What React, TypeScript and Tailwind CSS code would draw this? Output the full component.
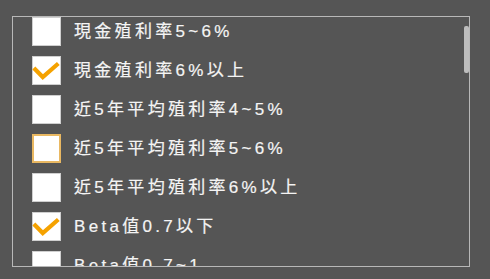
import type { ReactNode } from "react";

type Item = {
  label: string;
  checked?: boolean;
  focused?: boolean;
};

const items: Item[] = [
  { label: "現金殖利率5~6%" },
  { label: "現金殖利率6%以上", checked: true },
  { label: "近5年平均殖利率4~5%" },
  { label: "近5年平均殖利率5~6%", focused: true },
  { label: "近5年平均殖利率6%以上" },
  { label: "Beta值0.7以下", checked: true },
  { label: "Beta值0.7~1" },
];

function Check() {
  return (
    <svg viewBox="0 0 29 29" className="absolute inset-0 h-full w-full overflow-visible">
      <path
        d="M2.5 13.5 L10.5 21.5 L25.5 8.5"
        fill="none"
        stroke="#f5a200"
        strokeWidth="4.5"
        strokeLinecap="square"
      />
    </svg>
  );
}

function Box({ checked, focused }: { checked?: boolean; focused?: boolean }): ReactNode {
  return (
    <div
      className={
        focused
          ? "relative h-[29px] w-[29px] shrink-0 border-2 border-[#e9b862] bg-white"
          : "relative h-[29px] w-[29px] shrink-0 border border-[#cfcfcf] bg-white"
      }
    >
      {checked && <Check />}
    </div>
  );
}

export default function App() {
  return (
    <div
      className="h-[279px] w-[490px] bg-[#555555] pl-3 pt-4"
      style={{ fontFamily: '"Liberation Sans", "Noto Sans CJK TC", sans-serif' }}
    >
      <div className="relative h-[251px] w-[458px] overflow-hidden border border-[#b8b8b8]">
        <ul className="flex flex-col gap-[10px] pl-[19px]">
          {items.map((it) => (
            <li key={it.label} className="flex h-[29px] items-center gap-[13px]">
              <Box checked={it.checked} focused={it.focused} />
              <span className="whitespace-nowrap text-[17px] leading-none tracking-[3.3px] text-[#f4f4f4] [-webkit-text-stroke:0.2px_#f4f4f4]">
                {it.label}
              </span>
            </li>
          ))}
        </ul>
        <div className="absolute right-0 top-[9px] h-[47px] w-[5px] rounded-[2px] bg-[#bdbdbd]" />
      </div>
    </div>
  );
}
